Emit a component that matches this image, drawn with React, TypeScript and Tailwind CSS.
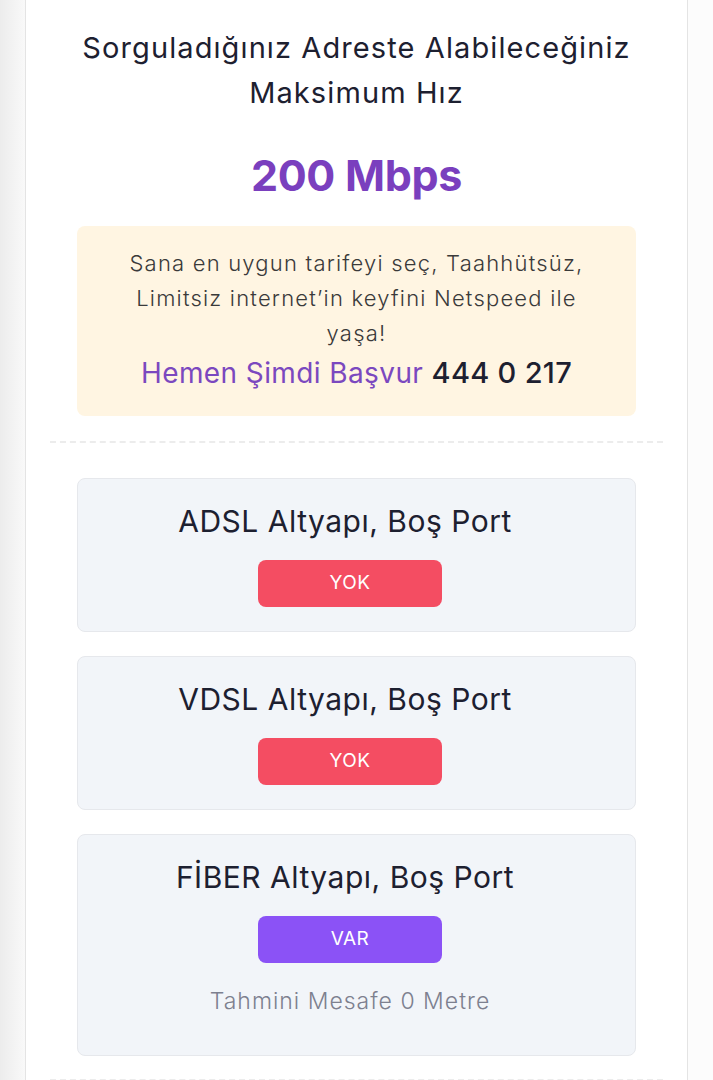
import React from "react";

const font = { fontFamily: "Inter, 'Open Sans', 'Noto Sans', sans-serif" };

function PortCard({ title, status, available, note }: { title: string; status: string; available: boolean; note?: string }) {
  return (
    <div className="mx-[27px] rounded-[8px] border border-[#e6e8ec] bg-[#f2f5f9] pt-[21px] pb-[24px] pr-[13px] flex flex-col items-center">
      <div className="mr-[10px] text-[30px] leading-[42px] text-[#1d2030] tracking-[0.5px]">{title}</div>
      <div
        className={
          "mt-[18px] w-[184px] h-[47px] rounded-[8px] flex items-center justify-center text-white text-[19px] tracking-[0.5px] " +
          (available ? "bg-[#8b52f6]" : "bg-[#f44d62]")
        }
      >
        {status}
      </div>
      {note && (
        <div className="mt-[20px] mb-[12px] text-[23px] leading-[36px] text-[#7d808f] font-light tracking-[1px]">{note}</div>
      )}
    </div>
  );
}

export default function App() {
  return (
    <div className="flex w-full min-h-[1080px] bg-[#fcfcfc]" style={font}>
      <div className="w-[25px] shrink-0 bg-gradient-to-r from-[#ececec] to-[#f9f9f9]" />
      <div className="w-[663px] shrink-0 bg-white border-x border-[#e4e4e4] px-[24px]">
        <div className="pt-[25px] text-center text-[29px] leading-[45px] text-[#1d2030] tracking-[1.1px]">
          Sorguladığınız Adreste Alabileceğiniz
          <br />
          Maksimum Hız
        </div>
        <div className="mt-[30px] text-center text-[43px] leading-[60px] font-bold text-[#7a3fbe] tracking-[-0.3px]">200 Mbps</div>
        <div className="mt-[21px] mx-[27px] rounded-[8px] bg-[#fff5e2] pt-[20px] pb-[19px] px-[40px] text-center">
          <div className="text-[22px] leading-[35px] text-[#3a3a3a] font-light tracking-[1.2px]">
            Sana en uygun tarifeyi seç, Taahhütsüz, Limitsiz internet’in keyfini Netspeed ile yaşa!
          </div>
          <div className="mt-[2px] leading-[40px]">
            <span className="text-[28px] text-[#7b48bf] tracking-[0.4px]">Hemen Şimdi Başvur </span>
            <span className="text-[29px] font-medium text-[#1d2030] tracking-[0.3px]">444 0 217</span>
          </div>
        </div>
        <div className="mt-[25px] border-t-2 border-dashed border-[#ececec]" />
        <div className="mt-[35px] flex flex-col gap-[24px]">
          <PortCard title="ADSL Altyapı, Boş Port" status="YOK" available={false} />
          <PortCard title="VDSL Altyapı, Boş Port" status="YOK" available={false} />
          <PortCard title="FİBER Altyapı, Boş Port" status="VAR" available={true} note="Tahmini Mesafe 0 Metre" />
        </div>
        <div className="mt-[23px] border-t-2 border-dashed border-[#ececec]" />
      </div>
    </div>
  );
}
